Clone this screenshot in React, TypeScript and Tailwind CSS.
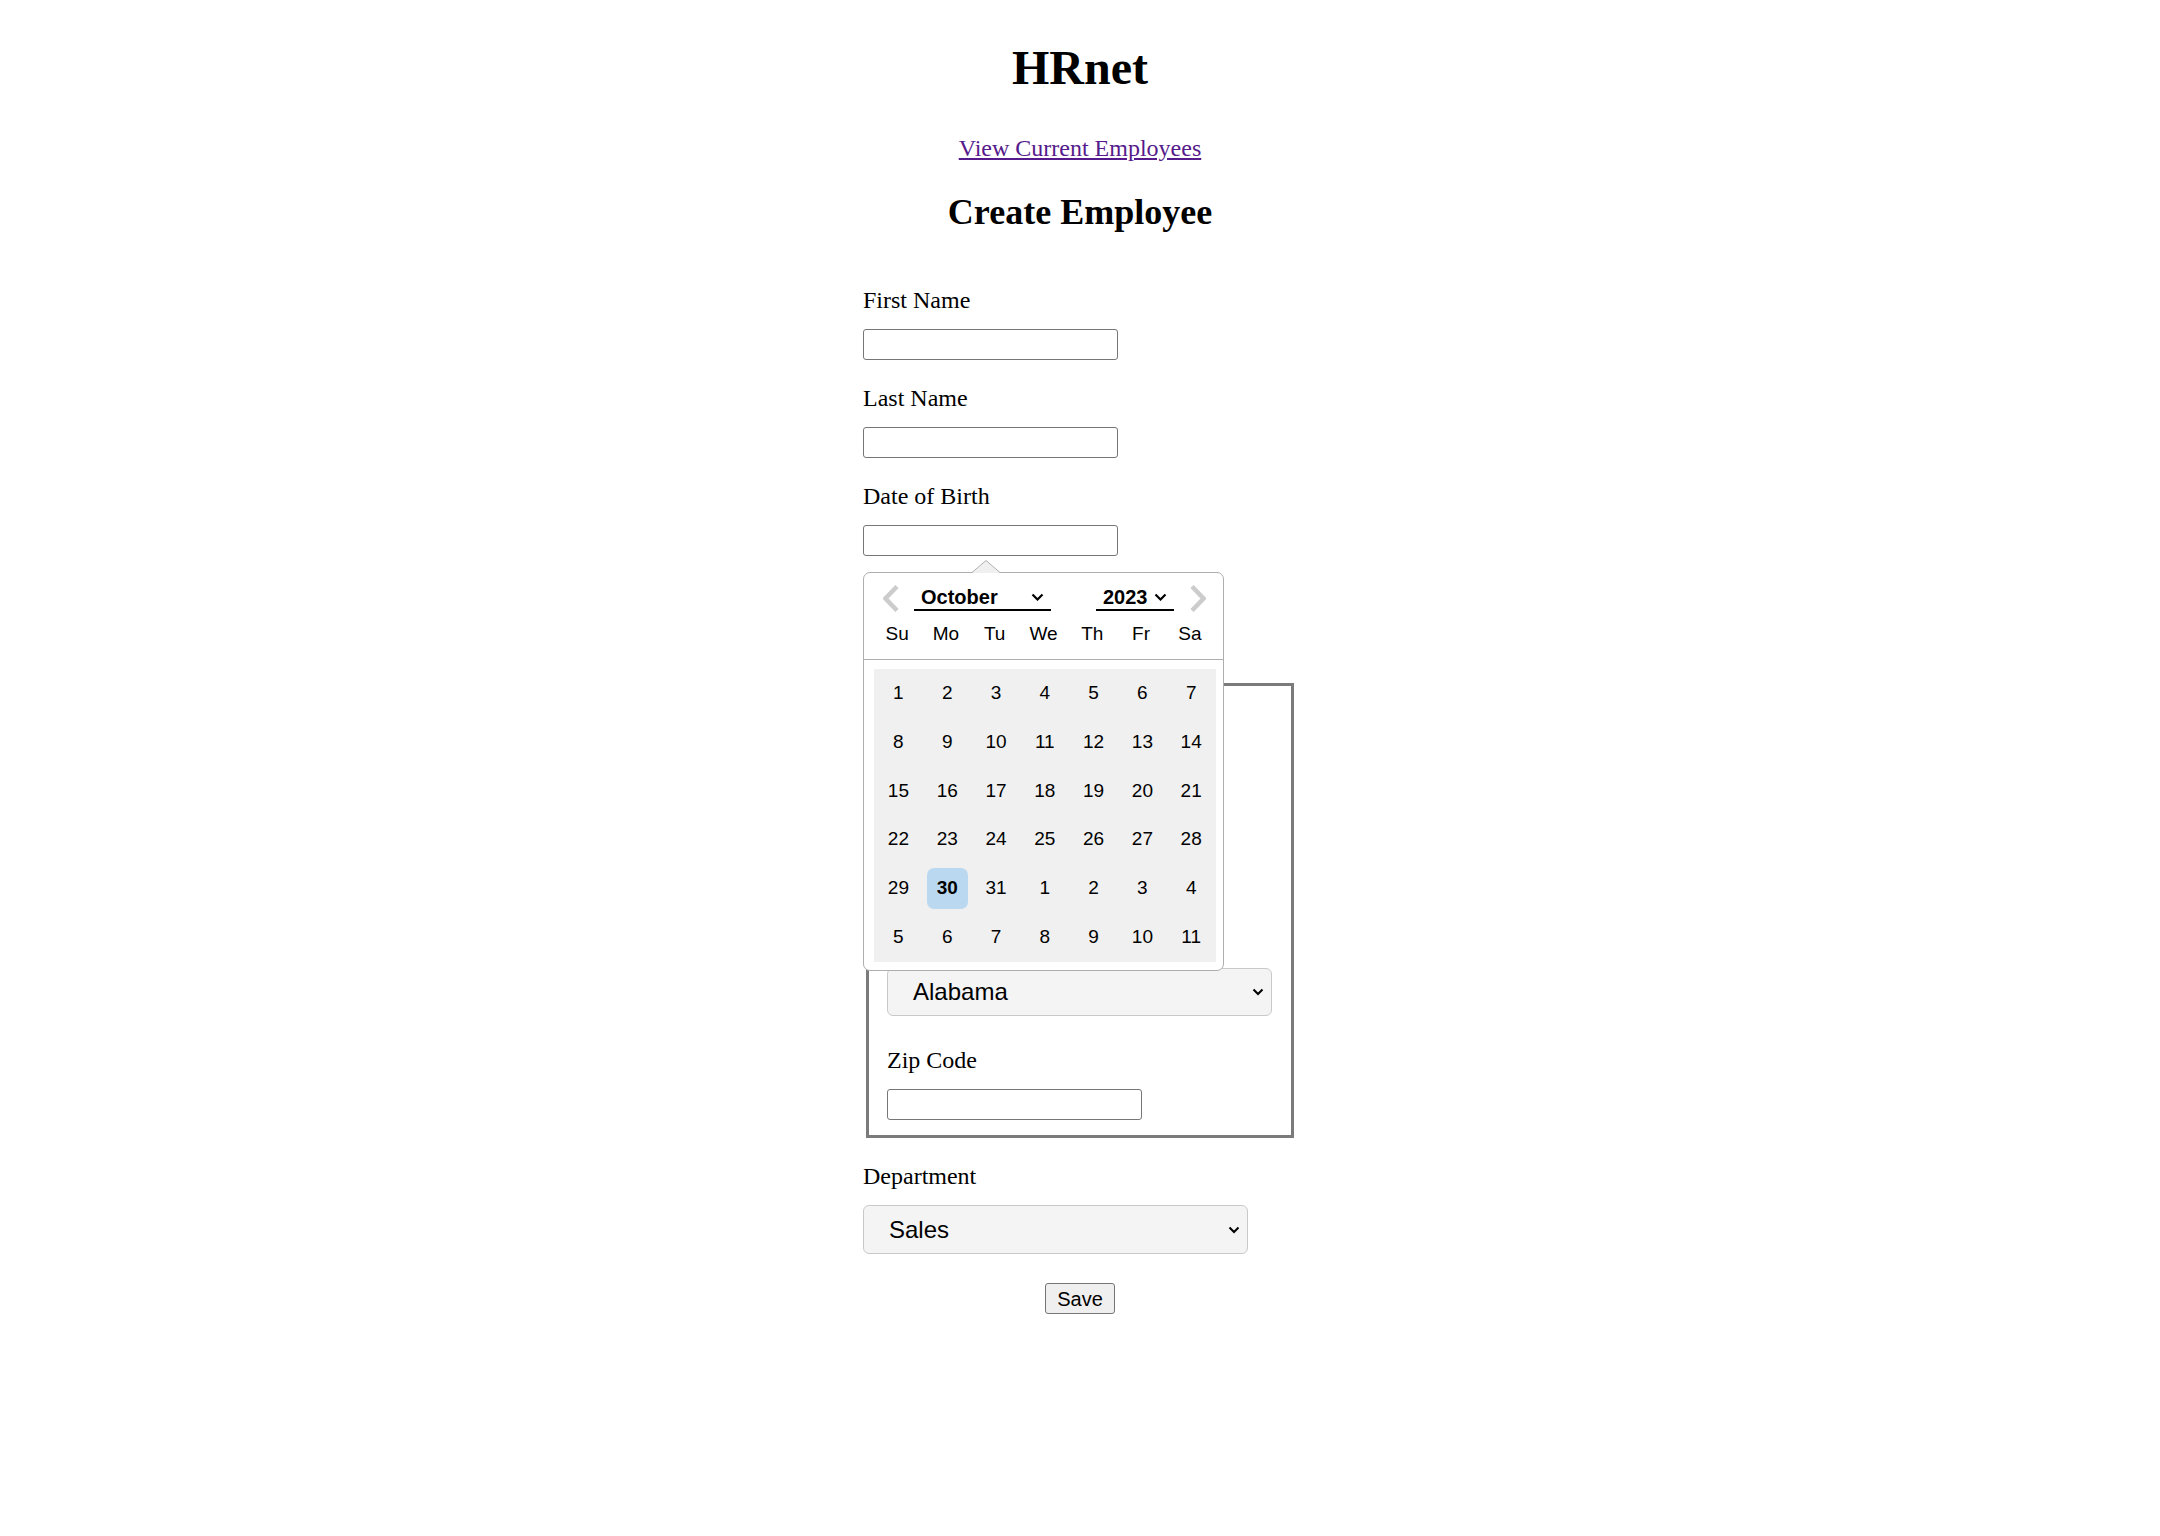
import React from "react"

const sans = "font-['Liberation_Sans',Arial,sans-serif]"

const dayNames = ["Su", "Mo", "Tu", "We", "Th", "Fr", "Sa"]

const weeks = [
  [1, 2, 3, 4, 5, 6, 7],
  [8, 9, 10, 11, 12, 13, 14],
  [15, 16, 17, 18, 19, 20, 21],
  [22, 23, 24, 25, 26, 27, 28],
  [29, 30, 31, 1, 2, 3, 4],
  [5, 6, 7, 8, 9, 10, 11],
]

function Caret() {
  return (
    <svg width="13" height="8" viewBox="0 0 13 8" className="shrink-0">
      <polyline points="1.5,1.5 6.5,6.5 11.5,1.5" fill="none" stroke="#000" strokeWidth="2.2" />
    </svg>
  )
}

function NavArrow({ dir }: { dir: "prev" | "next" }) {
  const pts = dir === "prev" ? "14,1.5 2.5,13.5 14,25.5" : "2,1.5 13.5,13.5 2,25.5"
  return (
    <svg width="16" height="27" viewBox="0 0 16 27" className="shrink-0">
      <polyline points={pts} fill="none" stroke="#cccccc" strokeWidth="4.5" strokeLinejoin="miter" />
    </svg>
  )
}

function TextInput() {
  return <input type="text" className="block h-[31px] w-[255px] rounded-[3px] border border-[#767676] bg-white px-[3px] outline-none" />
}

function Label({ children, first, mb = "mb-[15px]", mt = "mt-[24px]" }: { children: React.ReactNode; first?: boolean; mb?: string; mt?: string }) {
  return <label className={`block leading-[28px] ${first ? "mt-0" : mt} ${mb}`}>{children}</label>
}

function FakeSelect({ value, h }: { value: string; h: string }) {
  return (
    <div className={`flex ${h} w-[385px] items-center justify-between rounded-[6px] border border-[#c9c9c9] bg-[#f4f4f4] pl-[25px] pr-[7px] ${sans} text-[24px] leading-[28px]`}>
      <span>{value}</span>
      <svg width="12" height="8" viewBox="0 0 12 8">
        <polyline points="1.5,1.5 6,6 10.5,1.5" fill="none" stroke="#000" strokeWidth="2" />
      </svg>
    </div>
  )
}

function DatePopup() {
  return (
    <div className={`absolute left-0 top-[47px] z-10 w-[361px] rounded-[7px] border border-[#aeaeae] bg-white ${sans} text-black`}>
      <svg width="28" height="13" viewBox="0 0 28 13" className="absolute left-[108px] top-[-13px]">
        <polygon points="0,13 14,0.5 28,13" fill="#f0f0f0" />
        <polyline points="0,12.5 14,0.5 28,12.5" fill="none" stroke="#aeaeae" strokeWidth="1" />
      </svg>

      <div className="border-b border-[#aeaeae] pb-[5px]">
        <div className="mt-[12px] flex h-[27px] items-start pl-[19px]">
          <NavArrow dir="prev" />
          <div className="ml-[15px] flex h-[26px] w-[137px] items-center justify-between border-b-2 border-black pl-[7px] pr-[7px] text-[20px] font-bold leading-[24px]">
            <span>October</span>
            <Caret />
          </div>
          <div className="ml-[45px] flex h-[26px] w-[78px] items-center justify-between border-b-2 border-black pl-[7px] pr-[7px] text-[20px] font-bold leading-[24px]">
            <span>2023</span>
            <Caret />
          </div>
          <div className="ml-[16px]">
            <NavArrow dir="next" />
          </div>
        </div>
        <div className="mt-[1px] flex justify-center">
          {dayNames.map((d) => (
            <div key={d} className="mx-[4px] h-[41px] w-[40.8px] text-center text-[19px] leading-[41px]">
              {d}
            </div>
          ))}
        </div>
      </div>

      <div className="mb-[8px] ml-[10px] mt-[9px] grid w-[341.6px] grid-cols-7 bg-[#f0f0f0]">
        {weeks.map((week, wi) =>
          week.map((day, di) => {
            const selected = wi === 4 && day === 30
            return (
              <div
                key={`${wi}-${di}`}
                className={`m-[4px] h-[40.8px] w-[40.8px] rounded-[7px] text-center text-[19px] leading-[40.8px] ${selected ? "bg-[#bad9f1] font-bold" : ""}`}
              >
                {day}
              </div>
            )
          })
        )}
      </div>
    </div>
  )
}

export default function App() {
  return (
    <div className="min-h-screen w-full bg-white pt-[40px] font-['Liberation_Serif','Times_New_Roman',serif] text-[24px] text-black">
      <h1 className="text-center text-[48px] font-bold leading-[56px]">HRnet</h1>

      <div className="mt-[38px] flex flex-col items-center">
        <a href="#" className="text-[24px] leading-[28px] text-[#551a8b] underline">
          View Current Employees
        </a>
        <h2 className="mt-[29px] text-[36px] font-bold leading-[42px]">Create Employee</h2>

        <form className="mt-[53px] w-[434px]" onSubmit={(e) => e.preventDefault()}>
          <Label first>First Name</Label>
          <TextInput />

          <Label>Last Name</Label>
          <TextInput />

          <Label>Date of Birth</Label>
          <div className="relative">
            <TextInput />
            <DatePopup />
          </div>

          <Label>Start Date</Label>
          <TextInput />

          <fieldset className="mx-[3px] mt-[16px] border-[3px] border-[#7b7b7b] px-[18px] pb-[15px] pt-[8px]">
            <legend className="px-[3px] leading-[28px]">Address</legend>

            <Label>Street</Label>
            <TextInput />

            <Label>City</Label>
            <TextInput />

            <Label mb="mb-[14px]">State</Label>
            <FakeSelect value="Alabama" h="h-[48px]" />

            <Label mt="mt-[30px]">Zip Code</Label>
            <TextInput />
          </fieldset>

          <Label>Department</Label>
          <FakeSelect value="Sales" h="h-[49px]" />
        </form>

        <button
          type="button"
          className={`mt-[29px] h-[31px] w-[70px] rounded-[3px] border border-[#767676] bg-[#efefef] ${sans} text-[20px] leading-[24px]`}
        >
          Save
        </button>
      </div>
    </div>
  )
}
